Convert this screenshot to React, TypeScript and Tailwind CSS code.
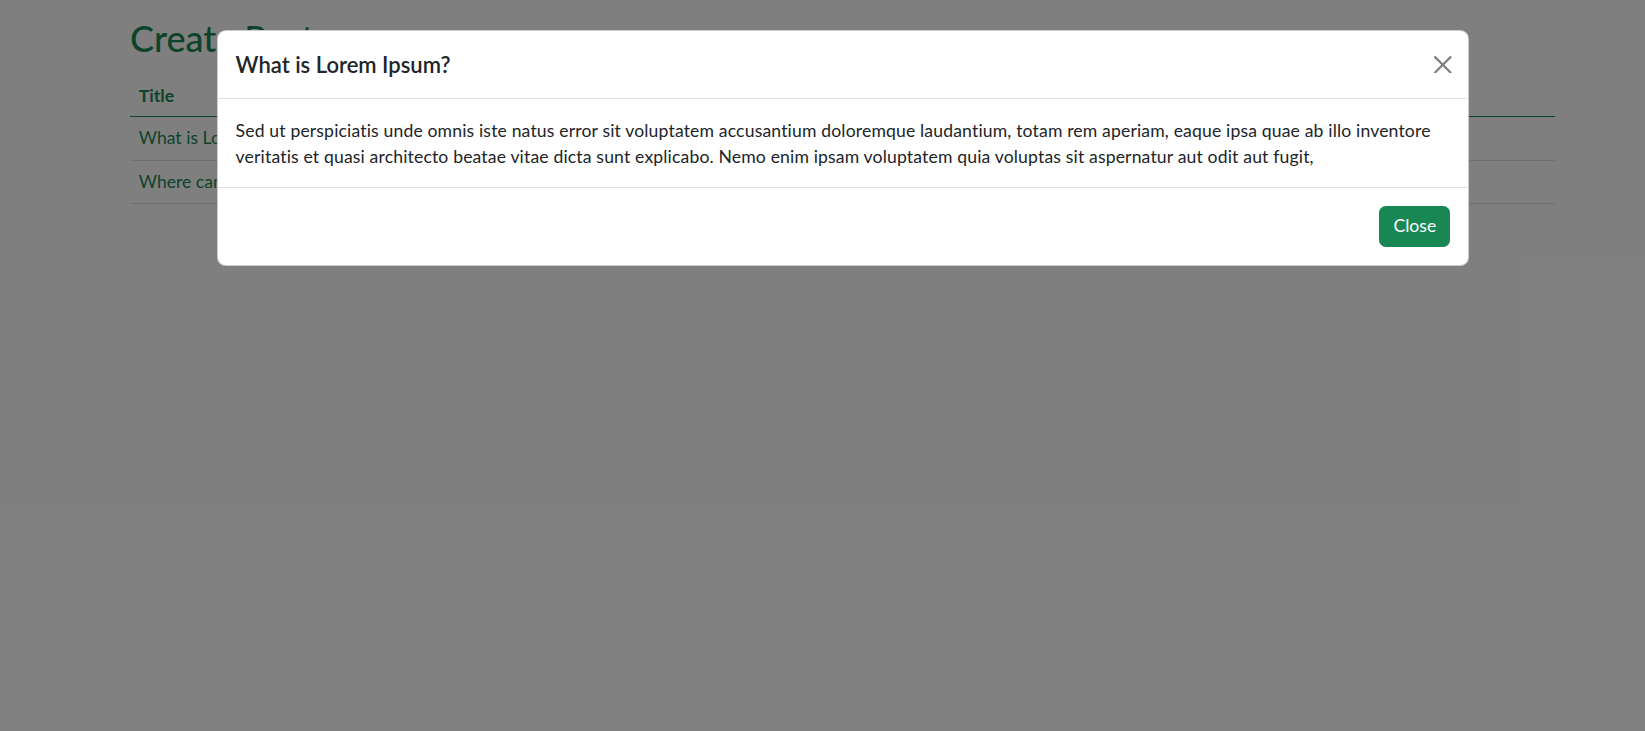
import React from "react";

function CloseIcon() {
  return (
    <svg viewBox="0 0 16 16" className="h-[17.6px] w-[17.6px]" fill="currentColor">
      <path d="M.293.293a1 1 0 0 1 1.414 0L8 6.586 14.293.293a1 1 0 1 1 1.414 1.414L9.414 8l6.293 6.293a1 1 0 0 1-1.414 1.414L8 9.414l-6.293 6.293a1 1 0 0 1-1.414-1.414L6.586 8 .293 1.707a1 1 0 0 1 0-1.414" />
    </svg>
  );
}

export default function App() {
  return (
    <div className="relative h-[731px] w-full overflow-hidden bg-white font-['Lato',sans-serif] text-[#212529]">
      {/* Page behind the modal */}
      <div className="ml-[130px] w-[1425px] pt-[17px]">
        <h2 className="mb-[13px] text-[36px] font-medium leading-[42px] text-[#198754]">Create Post</h2>
        <table className="w-full text-[17.6px] leading-[26.4px] text-[#198754]">
          <thead>
            <tr className="border-b border-[#198754]">
              <th className="px-[8.8px] pb-[7px] pt-[10.6px] text-left font-bold">Title</th>
            </tr>
          </thead>
          <tbody>
            <tr className="border-b border-[#dee2e6]">
              <td className="px-[8.8px] py-[8.3px]">What is Lorem Ipsum?</td>
            </tr>
            <tr className="border-b border-[#dee2e6]">
              <td className="px-[8.8px] py-[8px]">Where can I get some?</td>
            </tr>
          </tbody>
        </table>
      </div>

      {/* Backdrop + modal */}
      <div className="absolute inset-0 bg-black/50">
        <div className="ml-[217px] mt-[30px] w-[1252px] overflow-hidden rounded-[8.8px] border border-black/20 bg-white">
          <div className="flex items-center justify-between border-b border-[#dee2e6] px-[17.6px] py-[17px]">
            <h5 className="text-[22px] font-semibold leading-[33px]">What is Lorem Ipsum?</h5>
            <button className="-mr-[6px] p-[4.4px] text-black opacity-50">
              <CloseIcon />
            </button>
          </div>
          <div className="whitespace-nowrap px-[17.6px] pb-[16.6px] pt-[18.6px] text-[17.6px] leading-[26.4px] tracking-[0.15px]">
            Sed ut perspiciatis unde omnis iste natus error sit voluptatem accusantium doloremque laudantium, totam rem aperiam, eaque ipsa quae ab illo inventore
            <br />
            veritatis et quasi architecto beatae vitae dicta sunt explicabo. Nemo enim ipsam voluptatem quia voluptas sit aspernatur aut odit aut fugit,
          </div>
          <div className="flex justify-end border-t border-[#dee2e6] p-[13.2px]">
            <button className="m-[4.4px] rounded-[6.6px] border border-[#198754] bg-[#198754] px-[13.2px] py-[6.6px] text-[17.6px] leading-[26.4px] text-white">
              Close
            </button>
          </div>
        </div>
      </div>
    </div>
  );
}
